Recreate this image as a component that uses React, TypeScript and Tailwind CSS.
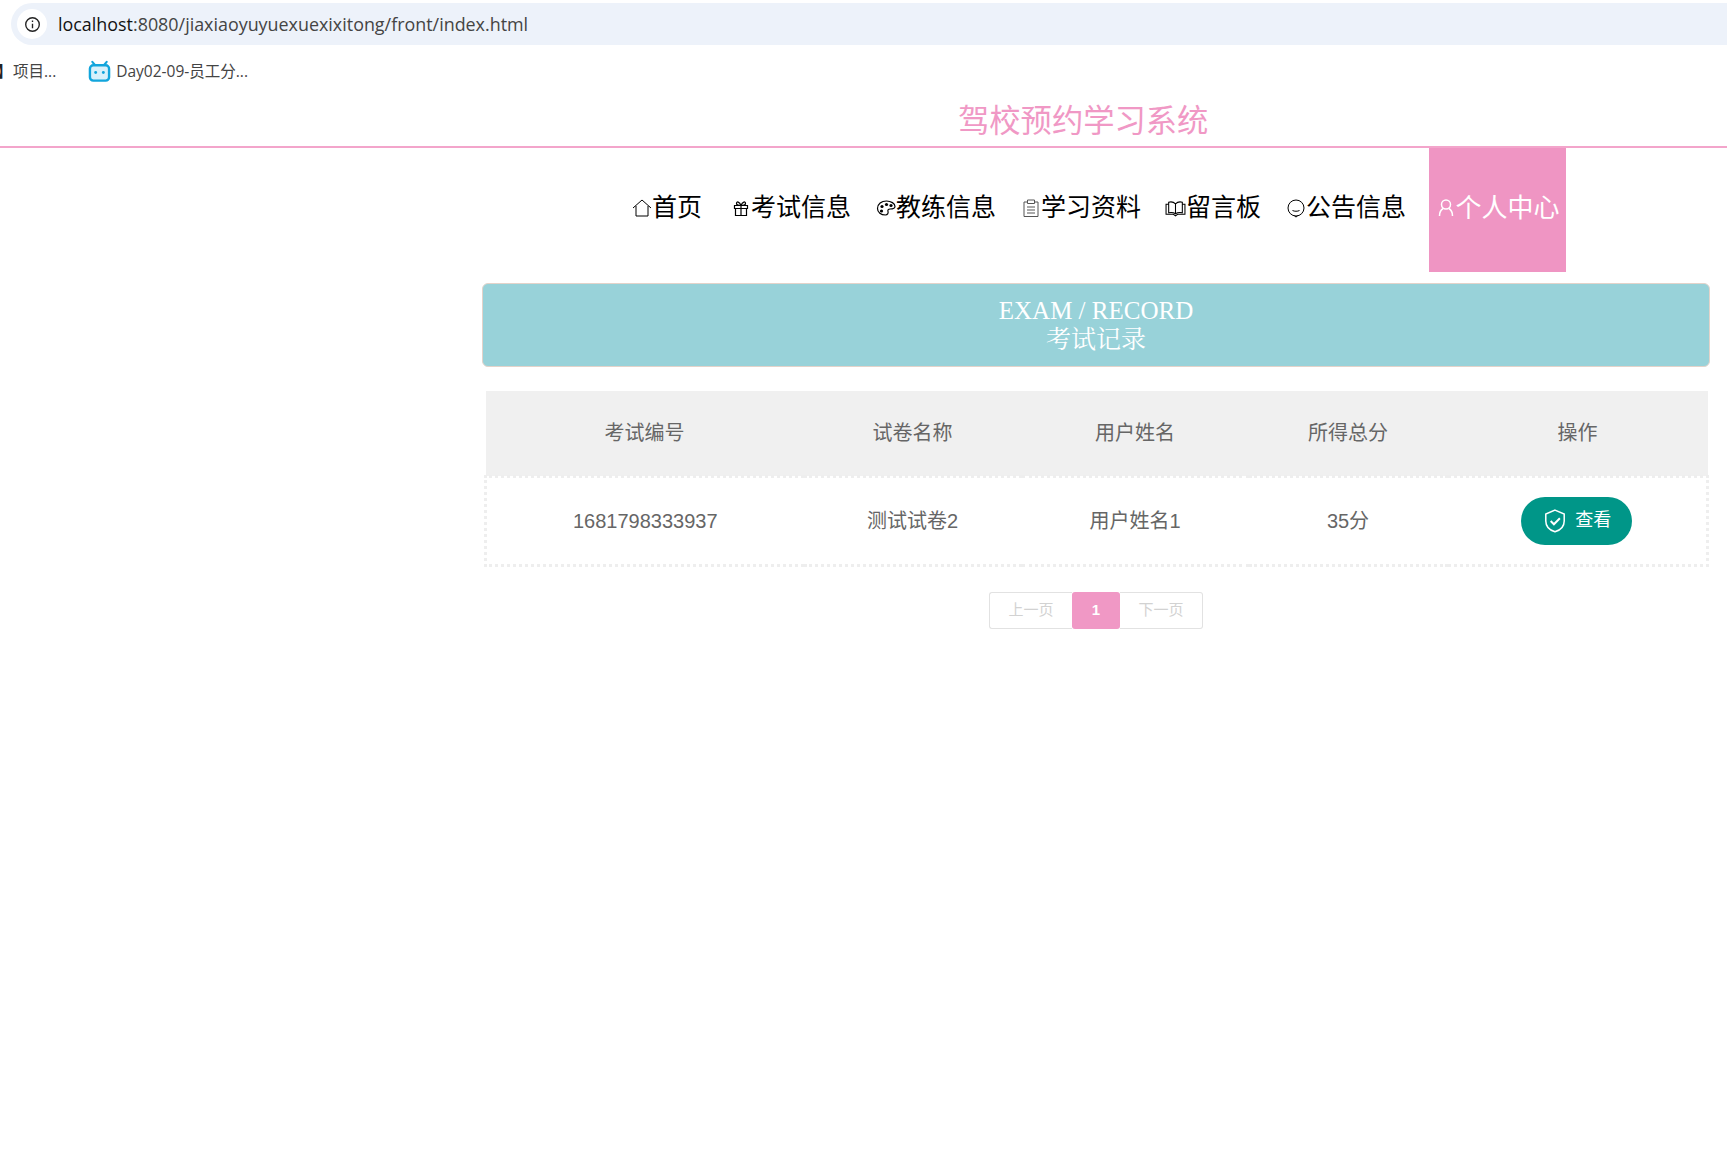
import type { ReactNode } from 'react'

const sans = "font-['Liberation_Sans','Noto_Sans_CJK_SC',sans-serif]"

const HomeIcon = () => (
  <svg viewBox="0 0 20 20" className="h-5 w-5" fill="none" stroke="currentColor" strokeWidth="1">
    <path d="M1 10 10 2l9 8M4 8v10h12V8" />
  </svg>
)

const GiftIcon = () => (
  <svg viewBox="0 0 20 20" className="h-5 w-5" fill="none" stroke="currentColor" strokeWidth="1.200">
    <path d="M3.500 7.500h13v3h-13zM4.500 10.500v7h11v-7M10 7.500v10M10 7.500C8.500 3.500 5.500 3 5.500 5.500c0 1.500 1.500 2 4.500 2s4.500-.5 4.500-2C14.500 3 11.500 3.500 10 7.500" />
  </svg>
)

const PaletteIcon = () => (
  <svg viewBox="0 0 20 20" className="h-5 w-5" fill="none" stroke="currentColor" strokeWidth="1.200">
    <path d="M1.500 10.500C1.500 6 5.500 3 10.500 3c4.500 0 8.500 2.500 8.500 5.500 0 2.500-3.500 2.500-5 2.500-1.500 0-2.500 1-2 2.500.5 1.800-.5 3.500-2.500 3.500-4.500 0-8-2.500-8-6.500Z" />
    <g fill="currentColor" stroke="none">
      <circle cx="6" cy="8.500" r="1.600" />
      <circle cx="10.500" cy="6.500" r="1.600" />
      <circle cx="15" cy="7.500" r="1.600" />
      <circle cx="5.500" cy="13" r="1.600" />
    </g>
  </svg>
)

const NoteIcon = () => (
  <svg viewBox="0 0 20 20" className="h-5 w-5" fill="none" stroke="#555" strokeWidth="1">
    <path d="M6.500 4H3v14.500h14V4h-3.500M6.500 2h7v3.500h-7zM6 9h8M6 12h8M6 15h8" />
  </svg>
)

const BookIcon = () => (
  <svg viewBox="0 0 20 20" className="h-[21px] w-[21px]" fill="none" stroke="currentColor" strokeWidth="1">
    <path d="M10 5.500C8 3.500 5.500 3.500 3.500 4v10c2.500-.5 4.500-.5 6.500 1 2-1.500 4-1.500 6.500-1V4c-2-.5-4.500-.5-6.500 1.500ZM10 5.500V15M3.500 6H1v9.500h7l2 1.500 2-1.500h7V6h-2.500" />
  </svg>
)

const SmileIcon = () => (
  <svg viewBox="0 0 20 20" className="h-5 w-5" fill="none" stroke="currentColor" strokeWidth="1">
    <circle cx="10" cy="10" r="8" />
    <path d="M6.500 12.500c2 1 5 1 7 0M8.500 18l1.500 1 1.500-1" />
  </svg>
)

const UserIcon = () => (
  <svg viewBox="0 0 20 20" className="h-5 w-5" fill="none" stroke="currentColor" strokeWidth="1.500">
    <circle cx="10" cy="6.500" r="4.500" />
    <path d="M7 10.500C4.500 12 3.500 15 3.500 18M13 10.500c2.500 1.500 3.500 4.500 3.500 7.500" />
  </svg>
)

const BiliIcon = () => (
  <svg viewBox="0 0 24 24" className="h-[23px] w-[23px]" fill="none">
    <path d="M7 5 4.500 2M17 5l2.500-3" stroke="#12a5dc" strokeWidth="2.200" strokeLinecap="round" />
    <rect x="2" y="5.500" width="20" height="16" rx="3.500" stroke="#12a5dc" strokeWidth="2.500" fill="#d8f1fb" />
    <circle cx="8" cy="13" r="1.500" fill="#12a5dc" />
    <circle cx="16" cy="13" r="1.500" fill="#12a5dc" />
  </svg>
)

const ShieldIcon = () => (
  <svg viewBox="0 0 24 24" className="h-[26px] w-[26px]" fill="none" stroke="currentColor" strokeWidth="1.400">
    <path d="M12 2 20.500 5.500V12c0 5-3.500 8.500-8.500 10-5-1.500-8.500-5-8.500-10V5.500Z" />
    <path d="m8 12 3 3 5.500-5.500" strokeWidth="1.800" />
  </svg>
)

function NavItem({ icon, label, className }: { icon: ReactNode; label: string; className: string }) {
  return (
    <a className={`flex items-center pb-[4px] text-[25px] text-black ${className}`}>
      {icon}
      <span>{label}</span>
    </a>
  )
}

const columns = [
  { title: '考试编号', value: '1681798333937', width: 'w-[318px]' },
  { title: '试卷名称', value: '测试试卷2', width: 'w-[218px]' },
  { title: '用户姓名', value: '用户姓名1', width: 'w-[227px]' },
  { title: '所得总分', value: '35分', width: 'w-[199px]' },
]

export default function App() {
  return (
    <div className={`min-h-[1173px] w-full overflow-hidden bg-white ${sans}`}>
      {/* browser chrome */}
      <div className="pl-[11px] pt-[3px]">
        <div className="flex h-[42px] items-center rounded-l-full bg-[#edf2fa] pl-[6px]">
          <div className="flex h-[30px] w-[30px] items-center justify-center rounded-full bg-white">
            <svg viewBox="0 0 20 20" className="h-[17px] w-[17px]" fill="none" stroke="#222" strokeWidth="1.600">
              <circle cx="10" cy="10" r="8" />
              <path d="M10 9v5.500M10 5.200v1.800" />
            </svg>
          </div>
          <span className="ml-[11px] font-['Open_Sans',sans-serif] text-[17.900px] text-[#444]">
            <span className="text-[#111]">localhost</span>:8080/jiaxiaoyuyuexuexixitong/front/index.html
          </span>
        </div>
      </div>
      <div className="flex h-[52px] items-center pt-[1px] font-['Open_Sans','Noto_Sans_CJK_SC',sans-serif] text-[15.500px] text-[#444]">
        <span className="-ml-[3px] w-[16px] font-bold text-[#222]">】</span>
        <span>项目...</span>
        <span className="ml-[32px]"><BiliIcon /></span>
        <span className="ml-[5px]">Day02-09-员工分...</span>
      </div>

      {/* title */}
      <div className="h-[51px] border-b-2 border-[#f3a5cb] pl-[958px]">
        <h1 className="text-[31.300px] leading-[50px] text-[#f098c5]">驾校预约学习系统</h1>
      </div>

      {/* nav */}
      <nav className="flex h-[124px] items-center pl-[632px]">
        <NavItem icon={<HomeIcon />} label="首页" className="" />
        <NavItem icon={<GiftIcon />} label="考试信息" className="ml-[29px]" />
        <NavItem icon={<PaletteIcon />} label="教练信息" className="ml-[25px]" />
        <NavItem icon={<NoteIcon />} label="学习资料" className="ml-[25px]" />
        <NavItem icon={<BookIcon />} label="留言板" className="ml-[24px]" />
        <NavItem icon={<SmileIcon />} label="公告信息" className="ml-[25px]" />
        <a className="ml-[23px] flex h-full w-[137px] items-center justify-center bg-[#ef95c3] pb-[4px] text-[26px] text-white">
          <UserIcon />
          <span>个人中心</span>
        </a>
      </nav>

      {/* content */}
      <main className="ml-[482px] mt-[11px] w-[1228px]">
        <div className="flex h-[84px] flex-col items-center justify-center rounded-[6px] border border-[#e3d3ca] bg-[#98d2d9] font-['Liberation_Serif','Noto_Serif_CJK_SC','Noto_Sans_CJK_SC',serif] text-[25px] leading-[29px] text-white">
          <span>EXAM / RECORD</span>
          <span>考试记录</span>
        </div>

        <table className="ml-[2px] mt-[24px] w-[1225px] table-fixed border-collapse text-center text-[20px] text-[#666]">
          <thead>
            <tr className="h-[85px] bg-[#f0f0f0]">
              {columns.map((col) => (
                <th key={col.title} className={`font-normal ${col.width}`}>{col.title}</th>
              ))}
              <th className="font-normal">操作</th>
            </tr>
          </thead>
          <tbody>
            <tr className="h-[89px]">
              {columns.map((col) => (
                <td key={col.title} className="border-y-[3px] border-dotted border-[#eeeeee] first:border-l-[3px]">{col.value}</td>
              ))}
              <td className="border-y-[3px] border-r-[3px] border-dotted border-[#eeeeee]">
                <button className="mx-auto flex h-[48px] w-[111px] items-center justify-center gap-[7px] rounded-full bg-[#009688] text-[18px] text-white">
                  <ShieldIcon />
                  <span>查看</span>
                </button>
              </td>
            </tr>
          </tbody>
        </table>

        <div className="mt-[25px] flex justify-center text-[15px]">
          <span className="flex h-[37px] w-[83px] items-center justify-center rounded-l-[3px] border border-r-0 border-[#e2e2e2] text-[#d2d2d2]">上一页</span>
          <span className="flex h-[37px] w-[48px] items-center justify-center rounded-[3px] bg-[#f098c5] font-bold text-white">1</span>
          <span className="flex h-[37px] w-[83px] items-center justify-center rounded-r-[3px] border border-l-0 border-[#e2e2e2] text-[#d2d2d2]">下一页</span>
        </div>
      </main>
    </div>
  )
}
